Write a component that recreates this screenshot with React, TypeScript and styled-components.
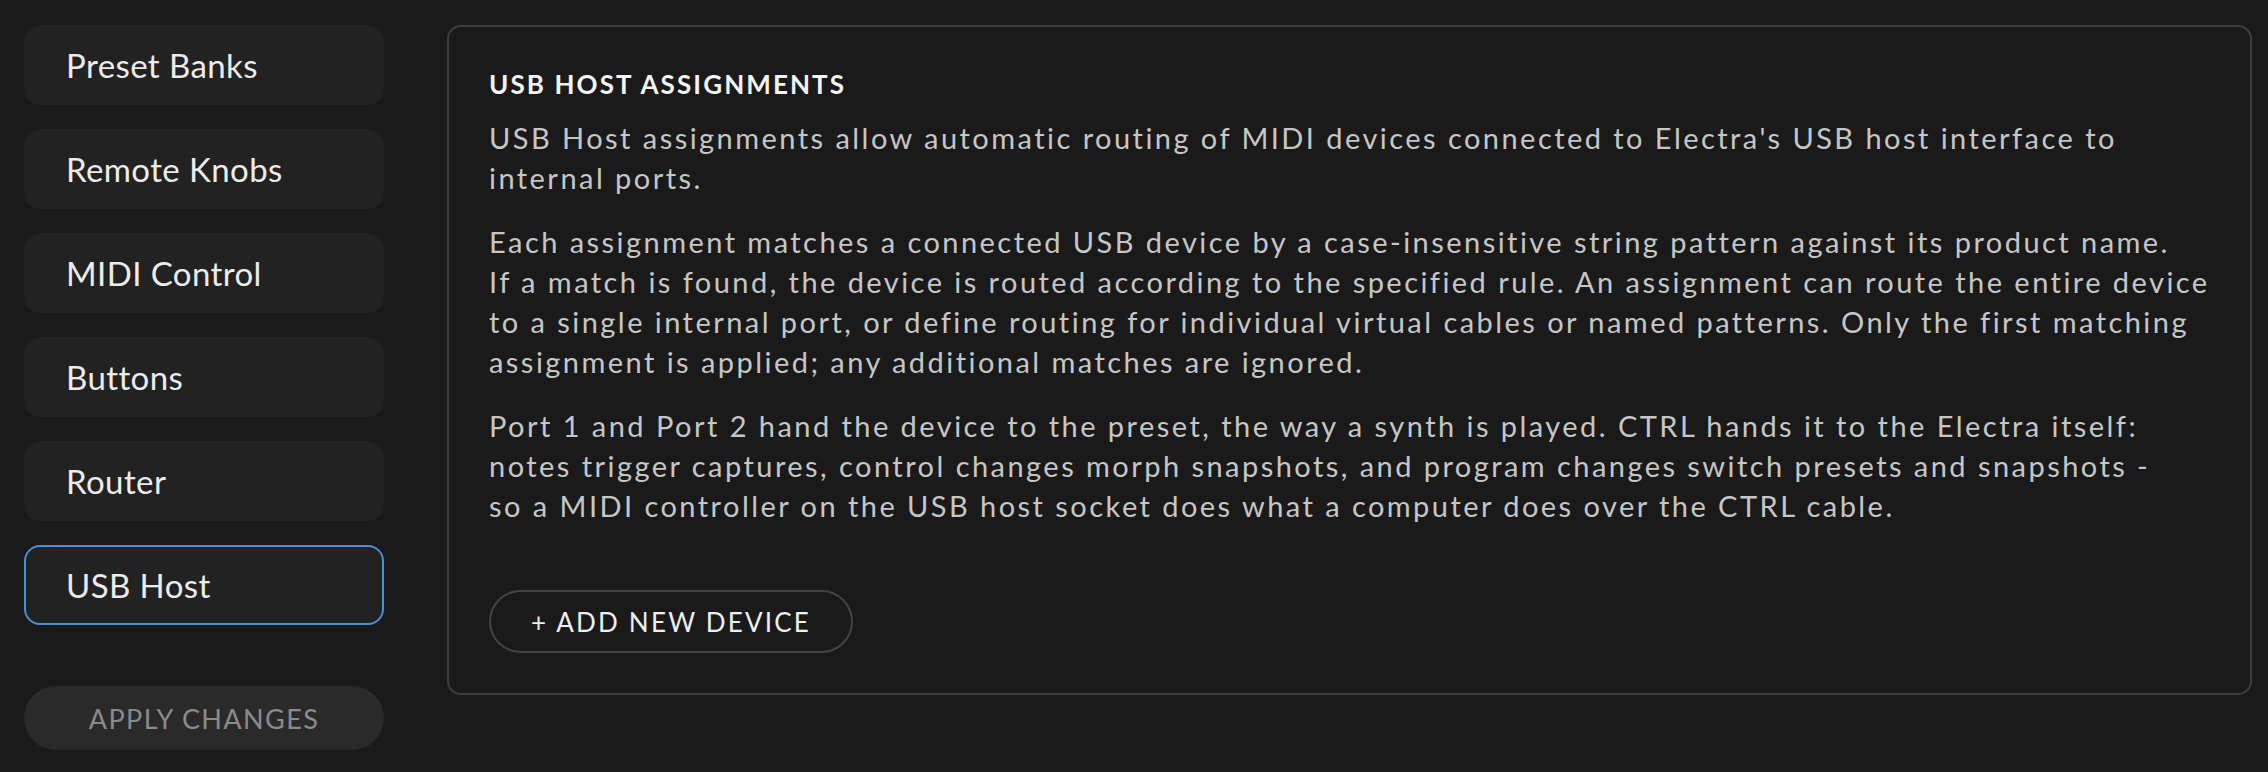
import React from "react";
import styled, { createGlobalStyle } from "styled-components";

const Global = createGlobalStyle`
  html, body { margin: 0; padding: 0; background: #1a1a1a; }
  body { font-family: Lato, "Noto Sans", sans-serif; color: #c6c6c6; }
  * { box-sizing: border-box; }
`;

const Page = styled.div`
  display: flex;
  align-items: flex-start;
  gap: 63px;
  padding: 25px 25px 0 24px;
  min-height: 772px;
`;

const Sidebar = styled.nav`
  width: 360px;
  flex: none;
  display: flex;
  flex-direction: column;
  gap: 24px;
`;

const NavItem = styled.div<{ $active?: boolean }>`
  height: 80px;
  display: flex;
  align-items: center;
  padding-left: 40px;
  border-radius: 16px;
  background: #222222;
  border: 2px solid ${(p) => (p.$active ? "#4a8fdc" : "transparent")};
  color: #ececec;
  font-size: 33px;
  letter-spacing: 0.4px;
`;

const ApplyButton = styled.button`
  margin-top: 37px;
  height: 64px;
  border: none;
  border-radius: 32px;
  background: #2a2a2a;
  color: #8a8a8a;
  font-family: Lato, "Noto Sans", sans-serif;
  font-size: 27px;
  letter-spacing: 1.4px;
  text-transform: uppercase;
  cursor: default;
`;

const Card = styled.section`
  flex: 1;
  border: 2px solid #3d3d3d;
  border-radius: 14px;
  padding: 42px 40px 40px;
  display: flex;
  flex-direction: column;
  align-items: flex-start;
`;

const Title = styled.h2`
  margin: 0 0 18px;
  font-size: 26px;
  line-height: 1.2;
  font-weight: 700;
  color: #f4f4f4;
  letter-spacing: 2.1px;
`;

const Para = styled.p`
  margin: 0 0 24px;
  font-size: 29px;
  line-height: 40px;
  color: #c6c6c6;
  white-space: nowrap;
  letter-spacing: 2.45px;
  &:last-of-type { margin-bottom: 0; }
`;

const AddButton = styled.button`
  margin-top: 64px;
  height: 63px;
  padding: 0 40px 0 40px;
  border: 2px solid #444444;
  border-radius: 32px;
  background: transparent;
  color: #efefef;
  font-family: Lato, "Noto Sans", sans-serif;
  font-size: 26px;
  letter-spacing: 2.2px;
  cursor: default;
`;

const items = ["Preset Banks", "Remote Knobs", "MIDI Control", "Buttons", "Router", "USB Host"];

export default function App() {
  return (
    <>
      <Global />
      <Page>
        <Sidebar>
          {items.map((it) => (
            <NavItem key={it} $active={it === "USB Host"}>
              {it}
            </NavItem>
          ))}
          <ApplyButton>Apply Changes</ApplyButton>
        </Sidebar>
        <Card>
          <Title>USB HOST ASSIGNMENTS</Title>
          <Para>
            USB Host assignments allow automatic routing of MIDI devices connected to Electra's USB host interface to
            <br />
            internal ports.
          </Para>
          <Para>
            Each assignment matches a connected USB device by a case-insensitive string pattern against its product name.
            <br />
            If a match is found, the device is routed according to the specified rule. An assignment can route the entire device
            <br />
            to a single internal port, or define routing for individual virtual cables or named patterns. Only the first matching
            <br />
            assignment is applied; any additional matches are ignored.
          </Para>
          <Para>
            Port 1 and Port 2 hand the device to the preset, the way a synth is played. CTRL hands it to the Electra itself:
            <br />
            notes trigger captures, control changes morph snapshots, and program changes switch presets and snapshots -
            <br />
            so a MIDI controller on the USB host socket does what a computer does over the CTRL cable.
          </Para>
          <AddButton>+ ADD NEW DEVICE</AddButton>
        </Card>
      </Page>
    </>
  );
}
